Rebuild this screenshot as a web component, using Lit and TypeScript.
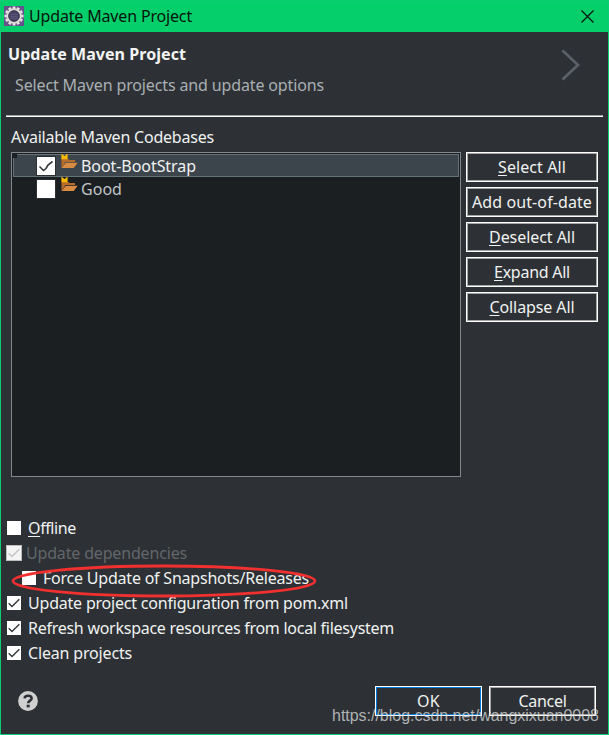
import { LitElement, html, css, svg, nothing } from "lit";
import { customElement, property } from "lit/decorators.js";
import { classMap } from "lit/directives/class-map.js";

/** A single line label; tracking is adjusted so that it takes the given width. */
@customElement("ui-label")
class UiLabel extends LitElement {
  @property() text = "";
  @property({ type: Number }) width = 0;
  @property({ type: Boolean }) mnemonic = false;

  static styles = css`
    :host { display: inline-block; white-space: pre; flex: none; }
    .line { display: inline-block; }
    .key { text-decoration: underline; text-decoration-thickness: 1px; text-underline-offset: 2px; text-decoration-skip-ink: none; }
  `;

  firstUpdated() {
    const line = this.renderRoot.querySelector(".line") as HTMLElement;
    const natural = line.getBoundingClientRect().width;
    if (this.width) {
      line.style.letterSpacing = `${(this.width - natural) / this.text.length}px`;
    }
  }

  render() {
    const head = this.mnemonic ? html`<span class="key">${this.text[0]}</span>` : nothing;
    return html`<span class="line">${head}${this.mnemonic ? this.text.slice(1) : this.text}</span>`;
  }
}

@customElement("ui-check")
class UiCheck extends LitElement {
  @property({ type: Boolean }) checked = false;
  @property({ type: Boolean }) dim = false;

  static styles = css`
    :host { display: block; flex: none; width: 14px; height: 14px; background: #fff; }
    :host([dim]) { box-shadow: 0 0 0 1px #bdbdbd; background: #f4f4f4; }
    svg { display: block; width: 100%; height: 100%; }
    path { fill: none; stroke: #34383b; stroke-width: 1.4; }
    :host([dim]) path { stroke: #c2c2c2; }
  `;

  render() {
    return this.checked
      ? html`<svg viewBox="0 0 14 14"><path d="M1.7 7.2 L5 10.4 L12.3 3.2" /></svg>`
      : nothing;
  }
}

interface Option {
  text: string;
  width: number;
  checked?: boolean;
  dim?: boolean;
  nested?: boolean;
  mnemonic?: boolean;
}

const options: Option[] = [
  { text: "Offline", width: 48, mnemonic: true },
  { text: "Update dependencies", width: 161, checked: true, dim: true },
  { text: "Force Update of Snapshots/Releases", width: 266, nested: true },
  { text: "Update project configuration from pom.xml", width: 320, checked: true },
  { text: "Refresh workspace resources from local filesystem", width: 366, checked: true },
  { text: "Clean projects", width: 104, checked: true },
];

const actions = [
  { text: "Select All", width: 68, mnemonic: true },
  { text: "Add out-of-date", width: 120, mnemonic: false },
  { text: "Deselect All", width: 86, mnemonic: true },
  { text: "Expand All", width: 76, mnemonic: true },
  { text: "Collapse All", width: 85, mnemonic: true },
];

const projects = [
  { text: "Boot-BootStrap", width: 115, selected: true },
  { text: "Good", width: 41, selected: false },
];

const teeth = Array.from({ length: 12 }, (_, i) => i * 30);

@customElement("app-root")
class AppRoot extends LitElement {
  static styles = css`
    :host {
      display: block;
      height: 735px;
      font: 16px/22px "Noto Sans", "Open Sans", sans-serif;
      color: #f0f1f1;
    }
    .window {
      position: relative;
      box-sizing: border-box;
      height: 735px;
      border: 1px solid #0dcd72;
      background: #2d3135;
      display: flex;
      flex-direction: column;
      overflow: hidden;
    }
    .title {
      height: 31px;
      flex: none;
      box-sizing: border-box;
      background: #04cf6b;
      color: #06140c;
      display: flex;
      align-items: center;
      padding: 0 14px 1px 3px;
    }
    .title ui-label { margin-left: 5px; }
    .title .close { margin-left: auto; }
    svg { display: block; flex: none; }
    .banner {
      height: 83px;
      flex: none;
      display: flex;
      justify-content: space-between;
      margin: 0 5px;
      padding: 0 23px 0 2px;
    }
    .banner .heading { font-weight: 700; display: block; margin-top: 11px; color: #f4f4f4; }
    .banner .sub { display: block; margin: 9px 0 0 7px; color: #a9afb3; }
    .banner svg { margin-top: 16px; }
    .rule { height: 1px; flex: none; margin: 0 5px; background: #a0a0a0; border-bottom: 1px solid #fff; }
    .caption { margin: 9px 0 0 10px; height: 26px; }
    .main { display: flex; gap: 5px; padding: 0 10px; height: 325px; flex: none; }
    .list {
      box-sizing: border-box;
      width: 450px;
      border: 1px solid #82878d;
      background: #1b1f22;
      padding: 1px 1px 0;
    }
    .row {
      box-sizing: border-box;
      height: 23px;
      display: flex;
      align-items: center;
      padding-left: 23px;
      border: 1px solid transparent;
      color: #c0c4c7;
    }
    .row.selected { background: #3d454c; border-color: #66727a; color: #f0f1f1; }
    .row.selected::before {
      content: "";
      align-self: flex-start;
      width: 4px;
      height: 4px;
      margin: -1px -4px 0 0;
      transform: translateX(-24px);
      background: #1b1f22;
    }
    .box {
      width: 18px;
      height: 18px;
      margin-top: 1px;
      background: #fff;
      outline: 1px solid #2b3034;
      flex: none;
    }
    .box path { fill: none; stroke: #34383b; stroke-width: 1.6; }
    .row .folder { margin: -8px 0 0 6px; }
    .row ui-label { margin: 0 0 0 3px; }
    .actions { display: flex; flex-direction: column; gap: 5px; }
    .button {
      box-sizing: border-box;
      width: 132px;
      height: 30px;
      border: 1px solid #fff;
      box-shadow: inset 0 0 0 1px #a5a5a5;
      display: flex;
      align-items: center;
      justify-content: center;
      color: #f0f1f1;
    }
    .options { margin: 38px 0 0 6px; }
    .option { height: 25px; display: flex; align-items: center; gap: 7px; }
    .option.nested { padding-left: 15px; }
    .option.dim { color: #62666a; gap: 5px; }
    .footer { margin: auto 12px 18px 17px; display: flex; align-items: center; gap: 7px; }
    .footer .help { margin-right: auto; }
    .footer .button { width: 107px; }
    .footer .button.primary { box-shadow: inset 0 0 0 1px #0078d7; }
    .ring { position: absolute; left: 10px; top: 562px; }
    .mark {
      position: absolute;
      left: 331px;
      top: 705px;
      font: 16px/20px "Liberation Sans", Arial, sans-serif;
      color: rgba(215, 217, 218, 0.78);
    }
  `;

  render() {
    return html`
      <div class="window">
        <div class="title">
          <svg width="20" height="20" viewBox="0 0 20 20">
            <rect width="20" height="20" fill="#69518c" />
            ${teeth.map(
              (a) => svg`<rect x="8.6" y="0.5" width="2.8" height="3" fill="#e4e2dd" transform="rotate(${a} 10 10)" />`
            )}
            <circle cx="10" cy="10" r="6.6" fill="#4a4468" stroke="#dcdad6" stroke-width="2.2" />
            <circle cx="10" cy="10" r="5.3" fill="none" stroke="#2f2b3d" stroke-width="0.9" />
            <path d="M6 8.5h8M5.8 10.5h8.4M6.4 12.5h7.2" stroke="#635c7c" stroke-width="0.7" />
          </svg>
          <ui-label text="Update Maven Project" width="163"></ui-label>
          <svg class="close" width="13" height="13" viewBox="0 0 13 13">
            <path d="M0.5 0.5 L12.5 12.5 M12.5 0.5 L0.5 12.5" stroke="#06140c" stroke-width="1.2" />
          </svg>
        </div>
        <div class="banner">
          <div>
            <ui-label class="heading" text="Update Maven Project" width="178"></ui-label>
            <ui-label class="sub" text="Select Maven projects and update options" width="309"></ui-label>
          </div>
          <svg width="19" height="34" viewBox="0 0 19 34">
            <path d="M1.5 2.5 L17 17 L1.5 31.5" fill="none" stroke="#5b6068" stroke-width="2.8" />
          </svg>
        </div>
        <div class="rule"></div>
        <div class="caption"><ui-label text="Available Maven Codebases" width="203"></ui-label></div>
        <div class="main">
          <div class="list">
            ${projects.map(
              (p) => html`
                <div class=${classMap({ row: true, selected: p.selected })}>
                  <svg class="box" viewBox="0 0 18 18">
                    ${p.selected ? svg`<path d="M2.5 9.5 L6.5 13.5 L9 11.5 L11 8 L15.5 4.5" />` : nothing}
                  </svg>
                  <svg class="folder" width="17" height="15" viewBox="0 0 17 15">
                    <path d="M0.5 14 V5 H7 L8.5 6 H14 V8 H4.5 Z" fill="#b86c2c" />
                    <path d="M0.6 14 L4.8 8.8 H16.6 L12.8 14 Z" fill="#d98b42" />
                    <path d="M1 5.3 V0.8 L3.5 3 L6 0.8 V5.3" fill="#f3b600" stroke="#f8bd00" stroke-width="1.2" />
                  </svg>
                  <ui-label text=${p.text} width=${p.width}></ui-label>
                </div>
              `
            )}
          </div>
          <div class="actions">
            ${actions.map(
              (a) => html`
                <div class="button">
                  <ui-label text=${a.text} width=${a.width} ?mnemonic=${a.mnemonic}></ui-label>
                </div>
              `
            )}
          </div>
        </div>
        <div class="options">
          ${options.map(
            (o) => html`
              <div class=${classMap({ option: true, nested: !!o.nested, dim: !!o.dim })}>
                <ui-check ?checked=${o.checked} ?dim=${o.dim}></ui-check>
                <ui-label text=${o.text} width=${o.width} ?mnemonic=${o.mnemonic}></ui-label>
              </div>
            `
          )}
        </div>
        <div class="footer">
          <svg class="help" width="20" height="20" viewBox="0 0 20 20">
            <circle cx="10" cy="10" r="9.9" fill="#d0d0d0" />
            <path d="M6.6 7.3 C6.9 3.9 13.6 3.9 13.6 7.4 C13.6 9.8 10.2 9.6 10.2 12.2" fill="none" stroke="#2d3135" stroke-width="2.6" />
            <rect x="8.7" y="13.7" width="3" height="2.7" fill="#2d3135" />
          </svg>
          <div class="button primary"><ui-label text="OK" width="23"></ui-label></div>
          <div class="button"><ui-label text="Cancel" width="48"></ui-label></div>
        </div>
        <svg class="ring" width="308" height="36" viewBox="0 0 308 36">
          <ellipse cx="153" cy="18" rx="151" ry="15" fill="none" stroke="#f2302f" stroke-width="2.8" />
        </svg>
        <div class="mark"><ui-label text="https://blog.csdn.net/wangxixuan0008" width="267"></ui-label></div>
      </div>
    `;
  }
}
